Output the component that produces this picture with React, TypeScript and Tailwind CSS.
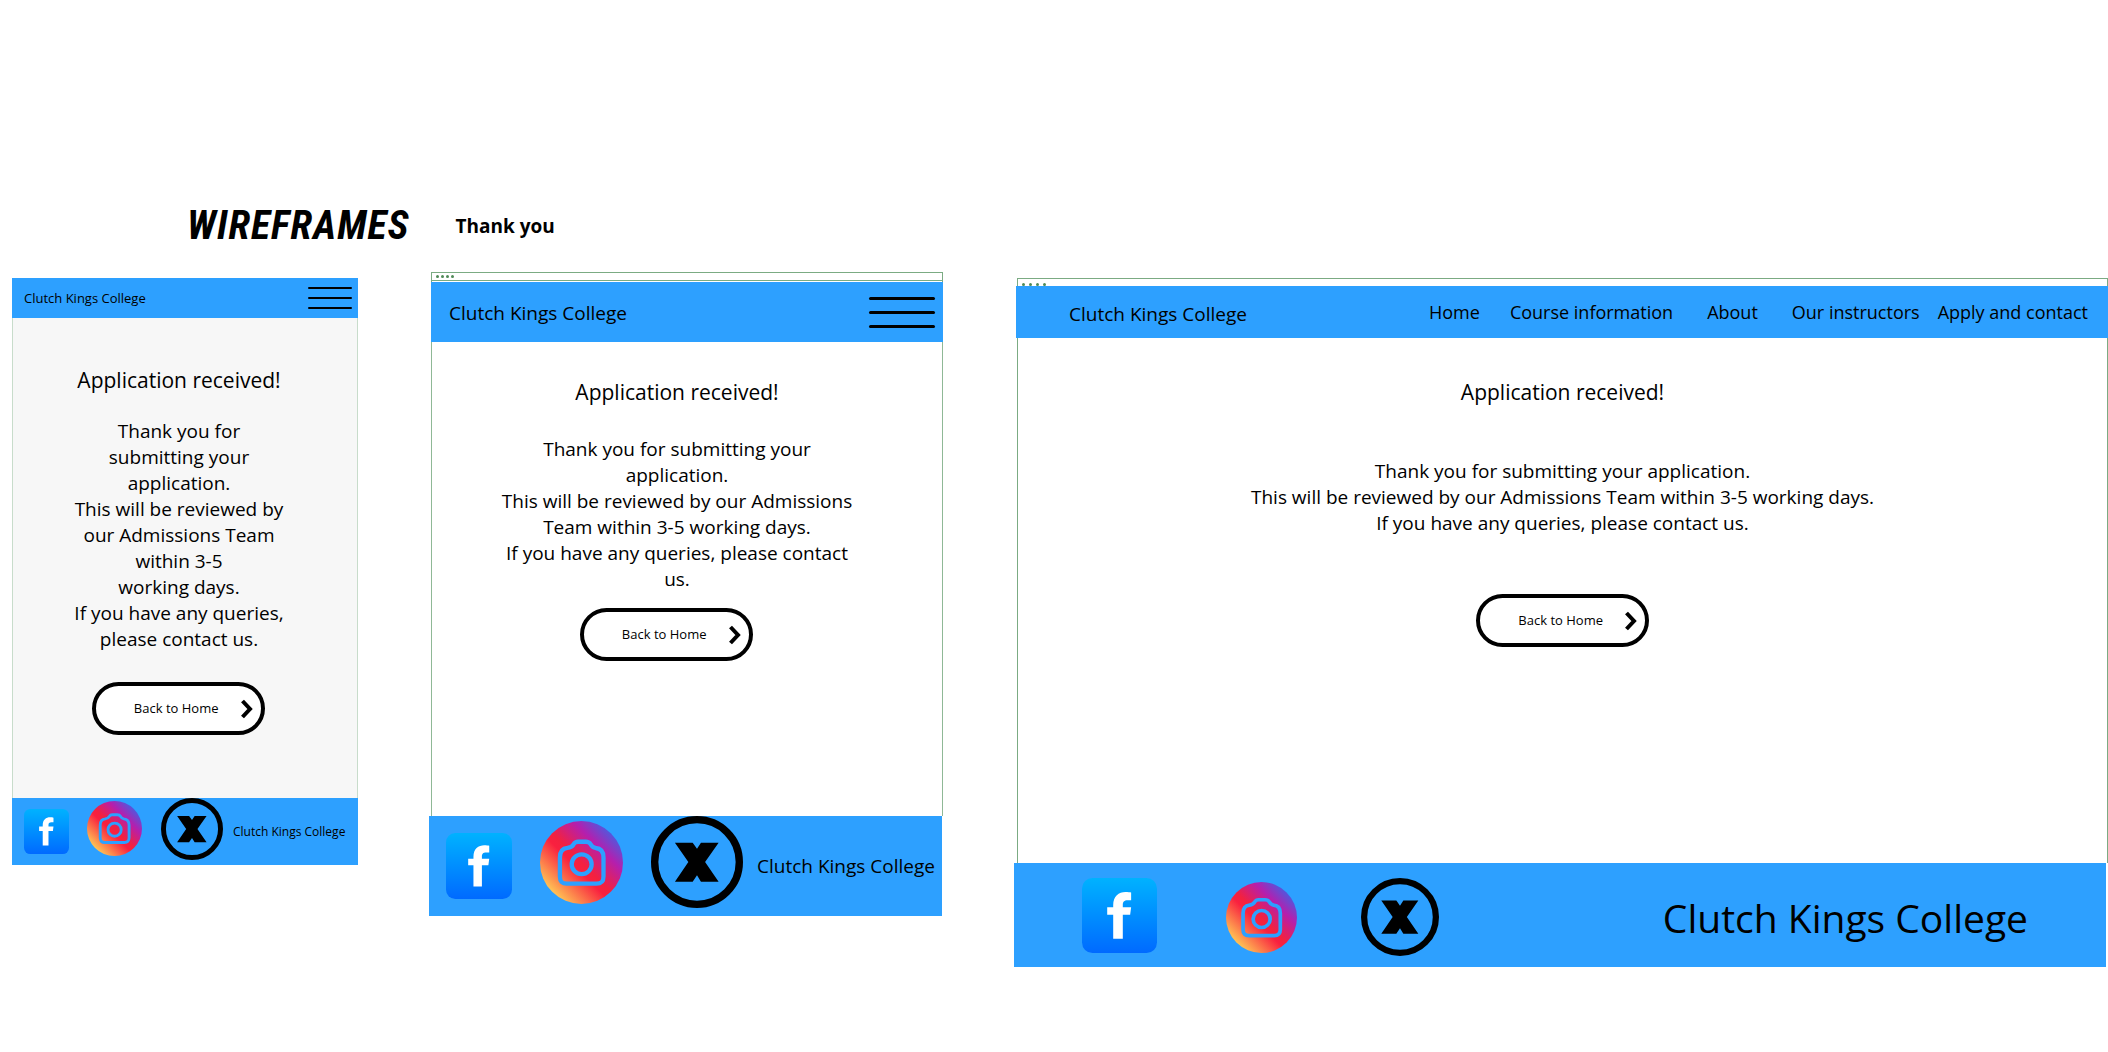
import React from "react";

const BLUE_BAR = "bg-[#2da0ff]";

function FacebookIcon({ className, id }: { className: string; id: string }) {
  return (
    <a href="#facebook" aria-label="Facebook" className={className}>
      <svg viewBox="0 0 100 100" className="block w-full">
        <defs>
          <linearGradient id={id} x1="0" y1="0" x2="0" y2="1">
            <stop offset="0" stopColor="#00b2ff" />
            <stop offset="1" stopColor="#006aff" />
          </linearGradient>
        </defs>
        <rect width="100" height="100" rx="14" fill={`url(#${id})`} />
        <path
          fill="#fff"
          d="M41.6 81V49H33.6V39H41.6V36C41.6 24 49 18.6 58 18.6C61 18.6 64 19 65.5 19.3V29.6H61C56 29.6 54.4 32 54.4 35.5V39H65.5L64.2 49H54.4V81Z"
        />
      </svg>
    </a>
  );
}

function InstagramIcon({ className, id }: { className: string; id: string }) {
  return (
    <a href="#instagram" aria-label="Instagram" className={className}>
      <svg viewBox="0 0 100 100" className="block w-full">
        <defs>
          <linearGradient id={id} x1="0" y1="1" x2="1" y2="0">
            <stop offset="0.14" stopColor="#ffc755" />
            <stop offset="0.44" stopColor="#f9203f" />
            <stop offset="0.5" stopColor="#f3213f" />
            <stop offset="0.7" stopColor="#b41fae" />
            <stop offset="0.87" stopColor="#4a5ce0" />
          </linearGradient>
        </defs>
        <circle cx="50" cy="50" r="50" fill={`url(#${id})`} />
        <g fill="none" stroke="#2da0ff" strokeWidth="5.2">
          <path d="M24 44C24 36 28 33 33 32.5C37 32 39 31 40.5 28C42 25.5 43.5 25 46 25H55C58 25 59.5 25.5 61 28C62.5 31 64 32 67 32.5C73 33 76.5 36 76.5 44V67C76.5 73 74 75.5 68 75.5H32.5C26.5 75.5 24 73 24 67Z" />
          <circle cx="50.2" cy="52.1" r="12" />
        </g>
      </svg>
    </a>
  );
}

function XIcon({ className }: { className: string }) {
  return (
    <a href="#x" aria-label="X" className={className}>
      <svg viewBox="0 0 100 100" className="block w-full">
        <circle cx="50" cy="50" r="46" fill="none" stroke="#000" strokeWidth="8" />
        <path d="M26 29H45.3L50 35.5L54.3 29H73.5L58.8 50L73.5 71.4H54.3L50 64.5L45.3 71.4H26L40.6 50Z" />
      </svg>
    </a>
  );
}

function BackButton({ className }: { className: string }) {
  return (
    <a
      href="#home"
      className={`flex h-[53px] w-[173px] items-center justify-end rounded-full border-4 border-black bg-white pr-2 text-[13px] ${className}`}
    >
      <span className="mr-[22px]">Back to Home</span>
      <svg viewBox="0 0 12 20" className="h-5 w-3" fill="none" stroke="#000" strokeWidth="4">
        <path d="M1.5 2L9 10L1.5 18" />
      </svg>
    </a>
  );
}

function WindowDots({ className }: { className: string }) {
  return (
    <div className={`flex ${className}`}>
      <span className="size-[3px] rounded-full bg-[#4f8a57]" />
      <span className="size-[3px] rounded-full bg-[#4f8a57]" />
      <span className="size-[3px] rounded-full bg-[#4f8a57]" />
      <span className="size-[3px] rounded-full bg-[#4f8a57]" />
    </div>
  );
}

function Mobile() {
  return (
    <section className="mt-1.5">
      <header className={`flex h-10 items-center justify-between pr-1.5 pl-3 ${BLUE_BAR}`}>
        <span className="pt-0.5 text-[13px]">Clutch Kings College</span>
        <button aria-label="Menu" className="flex w-11 flex-col gap-2">
          <span className="h-0.5 w-full rounded-full bg-black" />
          <span className="h-0.5 w-full rounded-full bg-black" />
          <span className="h-0.5 w-full rounded-full bg-black" />
        </button>
      </header>
      <main className="flex flex-col items-center border-x border-[#c8dccb] bg-[#f7f7f7] px-5 pt-12 pb-[63px] text-center">
        <h2 className="-ml-3 text-[21px] leading-7">Application received!</h2>
        <p className="mt-6 -ml-3 text-[19px] leading-[26px]">
          Thank you for
          <br />
          submitting your
          <br />
          application.
          <br />
          This will be reviewed by
          <br />
          our Admissions Team
          <br />
          within 3-5
          <br />
          working days.
          <br />
          If you have any queries,
          <br />
          please contact us.
        </p>
        <BackButton className="mt-[30px] -ml-3.5" />
      </main>
      <footer className={`flex h-[67px] items-center pl-3 ${BLUE_BAR}`}>
        <FacebookIcon id="fb-mobile" className="w-[45px]" />
        <InstagramIcon id="ig-mobile" className="mb-1.5 ml-[18px] w-[55px]" />
        <XIcon className="mb-1.5 ml-[19px] w-[62px]" />
        <span className="ml-2.5 text-xs whitespace-nowrap">Clutch Kings College</span>
      </footer>
    </section>
  );
}

function Tablet() {
  return (
    <section>
      <div className="ml-0.5 h-[10px] border border-b-0 border-[#7bab83]">
        <WindowDots className="h-2 items-center gap-0.5 border-b border-[#7bab83] pl-1" />
      </div>
      <header className={`ml-0.5 flex h-[60px] items-center justify-between pr-2 pl-[18px] ${BLUE_BAR}`}>
        <span className="pt-0.5 text-[19px]">Clutch Kings College</span>
        <button aria-label="Menu" className="flex w-[66px] flex-col gap-[11px]">
          <span className="h-[3px] w-full rounded-full bg-black" />
          <span className="h-[3px] w-full rounded-full bg-black" />
          <span className="h-[3px] w-full rounded-full bg-black" />
        </button>
      </header>
      <main className="ml-0.5 flex flex-col items-center border-x border-[#8fb896] px-10 pt-9 pb-[155px] text-center">
        <h2 className="-ml-5 text-[21px] leading-7">Application received!</h2>
        <p className="mt-[30px] -ml-5 text-[19px] leading-[26px]">
          Thank you for submitting your
          <br />
          application.
          <br />
          This will be reviewed by our Admissions
          <br />
          Team within 3-5 working days.
          <br />
          If you have any queries, please contact
          <br />
          us.
        </p>
        <BackButton className="mt-4 -ml-[42px]" />
      </main>
      <footer className={`mr-px flex h-[100px] items-center pl-[17px] ${BLUE_BAR}`}>
        <FacebookIcon id="fb-tablet" className="w-[66px]" />
        <InstagramIcon id="ig-tablet" className="mb-2 ml-7 w-[83px]" />
        <XIcon className="mb-2 ml-7 w-[92px]" />
        <span className="ml-3.5 text-[19px] whitespace-nowrap">Clutch Kings College</span>
      </footer>
    </section>
  );
}

function Desktop() {
  return (
    <section className="mt-1.5">
      <div className="ml-[3px] h-2 border border-b-0 border-[#7bab83]">
        <WindowDots className="h-[7px] items-end gap-1 pl-1" />
      </div>
      <header className={`ml-0.5 flex h-[52px] items-center pr-5 pl-[53px] ${BLUE_BAR}`}>
        <span className="mr-auto pt-1 text-[19px]">Clutch Kings College</span>
        <nav className="flex text-lg whitespace-nowrap">
          <a href="#home">Home</a>
          <a href="#courses" className="ml-[30px]">Course information</a>
          <a href="#about" className="ml-[34px]">About</a>
          <a href="#instructors" className="ml-[34px]">Our instructors</a>
          <a href="#apply" className="ml-[18px]">Apply and contact</a>
        </nav>
      </header>
      <main className="ml-[3px] flex flex-col items-center border-x border-[#7bab83] pt-10 pb-[216px] text-center">
        <h2 className="text-[21px] leading-7">Application received!</h2>
        <p className="mt-[52px] text-[19px] leading-[26px]">
          Thank you for submitting your application.
          <br />
          This will be reviewed by our Admissions Team within 3-5 working days.
          <br />
          If you have any queries, please contact us.
        </p>
        <BackButton className="mt-[58px]" />
      </main>
      <footer className={`mr-0.5 flex h-[104px] items-center pr-[78px] pl-[68px] ${BLUE_BAR}`}>
        <FacebookIcon id="fb-desktop" className="w-[75px]" />
        <InstagramIcon id="ig-desktop" className="mt-1 ml-[69px] w-[71px]" />
        <XIcon className="mt-1 ml-16 w-[78px]" />
        <span className="ml-auto pt-1.5 text-[39px] whitespace-nowrap">Clutch Kings College</span>
      </footer>
    </section>
  );
}

export default function App() {
  return (
    <div className="min-h-screen bg-white pt-[202px] pl-3 font-['Open_Sans',sans-serif] text-black">
      <div className="flex h-12 items-center gap-[46px] pl-[175px]">
        <h1 className="font-['Roboto_Condensed','Liberation_Sans_Narrow','DejaVu_Sans_Condensed',sans-serif] text-[40px] leading-none font-bold tracking-wide italic">
          WIREFRAMES
        </h1>
        <p className="text-[19px] font-bold">Thank you</p>
      </div>
      <div className="mt-[22px] grid grid-cols-[346fr_514fr_1094fr] items-start gap-[71px]">
        <Mobile />
        <Tablet />
        <Desktop />
      </div>
    </div>
  );
}
